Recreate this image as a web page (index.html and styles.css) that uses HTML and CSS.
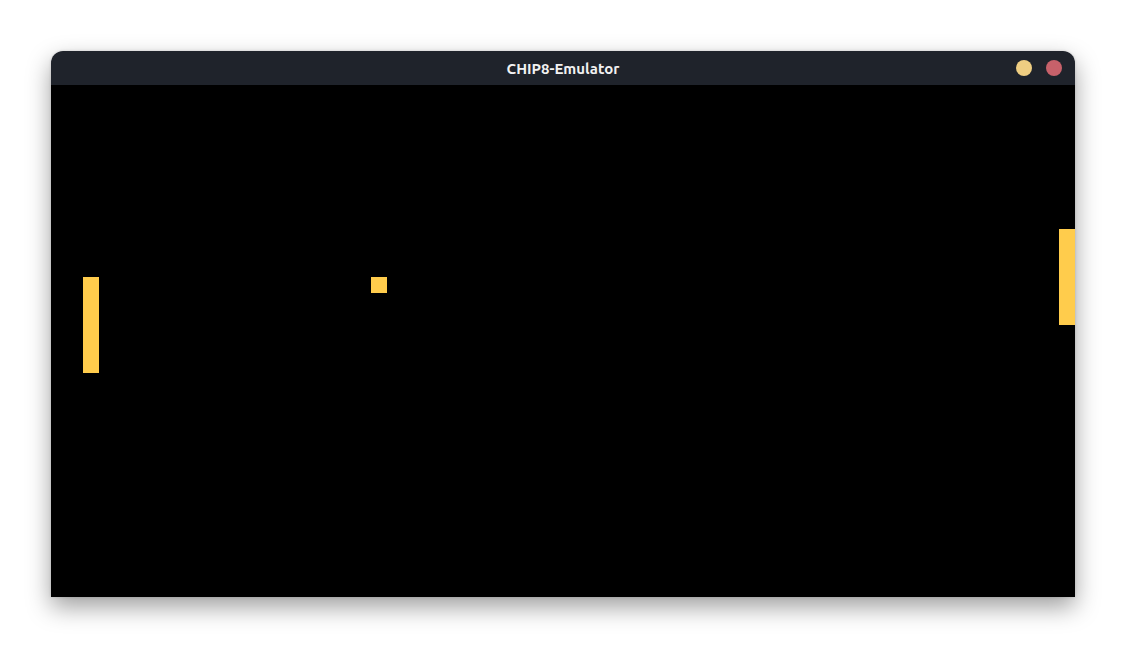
FILE: index.html
```html
<!DOCTYPE html>
<html>
<head>
<meta charset="utf-8">
<title>CHIP8-Emulator</title>
<link rel="stylesheet" href="styles.css">
</head>
<body>
<div class="window">
  <div class="titlebar">
    <span class="title">CHIP8-Emulator</span>
    <div class="controls">
      <span class="btn btn-min"></span>
      <span class="btn btn-close"></span>
    </div>
  </div>
  <div class="screen">
    <div class="px paddle-left"></div>
    <div class="px ball"></div>
    <div class="px paddle-right"></div>
  </div>
</div>
</body>
</html>
```
FILE: styles.css
```css
html, body {
  margin: 0;
  padding: 0;
  background: #ffffff;
}
body {
  padding: 51px 0 0 51px;
  height: 648px;
  box-sizing: border-box;
  font-family: "Ubuntu", "Noto Sans", "Open Sans", sans-serif;
}
.window {
  width: 1024px;
  border-radius: 12px 12px 0 0;
  overflow: hidden;
  box-shadow: 0 10px 24px rgba(0, 0, 0, 0.38), 0 0 3px rgba(0, 0, 0, 0.15);
}
.titlebar {
  height: 34px;
  background: #1f232b;
  display: flex;
  align-items: center;
  justify-content: center;
  position: relative;
}
.title {
  color: #f2f2f2;
  font-size: 15px;
  font-weight: 700;
}
.controls {
  position: absolute;
  right: 13px;
  top: 9px;
  display: flex;
  gap: 14px;
}
.btn {
  width: 16px;
  height: 16px;
  border-radius: 50%;
  display: block;
}
.btn-min { background: #efce82; }
.btn-close { background: #c7616a; }
.screen {
  height: 512px;
  background: #000000;
  display: grid;
  grid-template-columns: repeat(64, 16px);
  grid-template-rows: repeat(32, 16px);
}
.px { background: #ffcc4c; }
.paddle-left { grid-column: 3; grid-row: 13 / span 6; }
.ball { grid-column: 21; grid-row: 13; }
.paddle-right { grid-column: 64; grid-row: 10 / span 6; }
```
